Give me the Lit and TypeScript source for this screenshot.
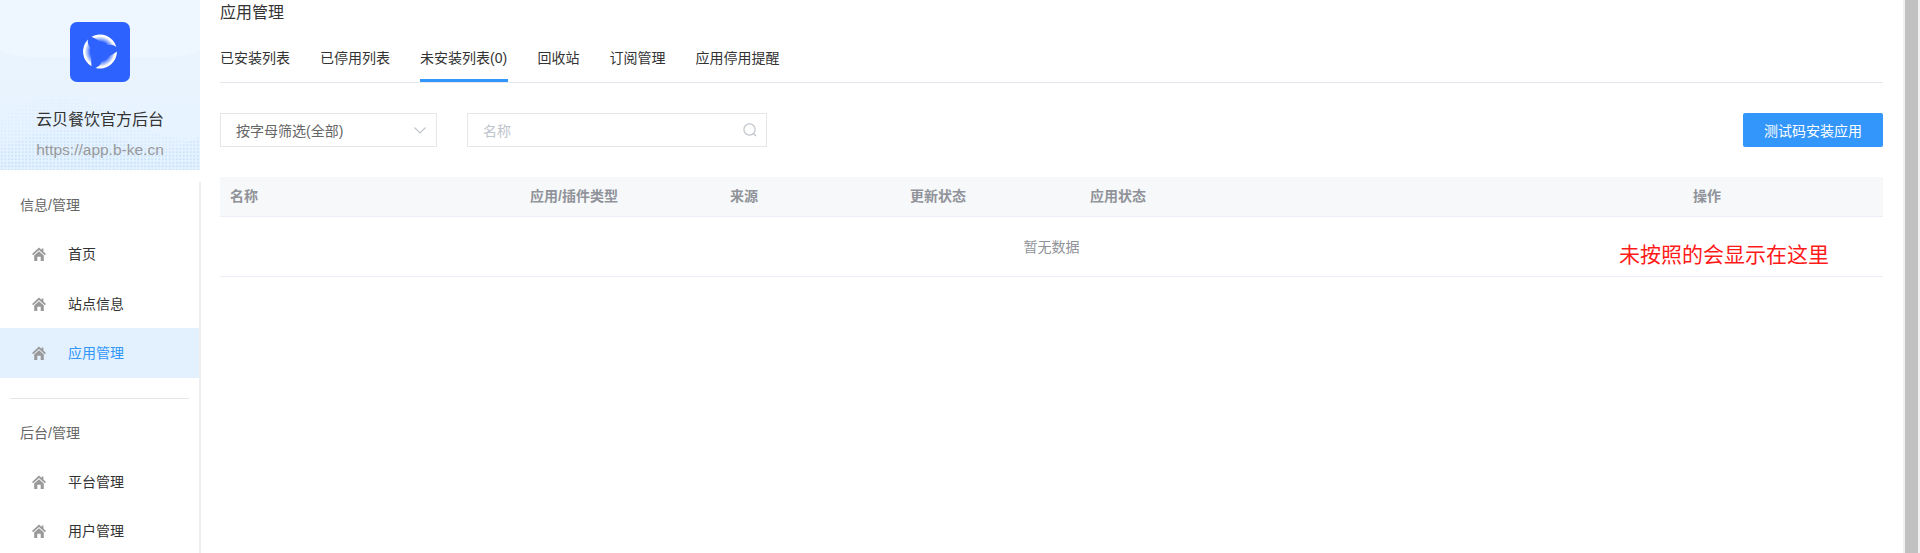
import { LitElement, html, css, svg } from "lit";
import { customElement } from "lit/decorators.js";

const homeIcon = html`<svg class="home" viewBox="0 0 14 14" width="14" height="14" aria-hidden="true">
  <path d="M7 .5 0 7l1.2 1.2L7 3l5.8 5.2L14 7l-2.6-2.4V1.6H9.6v1.3z"/>
  <path d="M2.2 8.6 7 4.2l4.8 4.4V14H8.7V9.8H5.3V14H2.2z"/>
</svg>`;

const arc = (rot: number) => svg`<path transform="rotate(${rot} 30 29.5)"
  d="M21.5 44.2A17 17 0 0 1 18 17.5Q17 22 20.6 26.1A10 10 0 0 0 21.3 34.5Q21 39 21.5 44.2Z" fill="url(#sw)"/>`;

@customElement("app-root")
export class AppRoot extends LitElement {
  static styles = css`
    :host {
      display: flex;
      height: 100vh;
      overflow: hidden;
      background: #fff;
      color: #333;
      font-family: "Liberation Sans", "Noto Sans CJK SC", sans-serif;
      font-size: 14px;
    }
    .side { width: 201px; flex: none; display: flex; flex-direction: column; }
    .brand {
      position: relative;
      width: 200px;
      height: 170px;
      flex: none;
      overflow: hidden;
      background: linear-gradient(180deg, #ecf5ff 0%, #e5f2fe 100%);
      display: flex;
      flex-direction: column;
      align-items: center;
    }
    .waves { position: absolute; inset: 0; }
    .logo {
      position: relative;
      width: 60px;
      height: 60px;
      margin-top: 22px;
      border-radius: 7px;
      background: #2d62ff;
    }
    .logo svg { display: block; }
    .brand-name {
      position: relative;
      margin-top: 26px;
      font-size: 16px;
      line-height: 24px;
      color: #333;
      white-space: nowrap;
    }
    .brand-url {
      position: relative;
      margin-top: 8px;
      font-size: 15.5px;
      line-height: 20px;
      color: #999;
      white-space: nowrap;
    }
    nav {
      margin-top: 12px;
      flex: 1;
      border-right: 2px solid #eeeeee;
    }
    .label { height: 47px; line-height: 47px; padding-left: 20px; color: #666; }
    .item {
      height: 49.5px;
      box-sizing: border-box;
      padding: 0 0 1px 32px;
      display: flex;
      align-items: center;
      gap: 22px;
      color: #333;
    }
    .item.active { background: #e3f1ff; color: #3296fa; }
    .home { fill: #999; flex: none; margin-top: 2px; }
    .sep { height: 1px; background: #e6e6e6; margin: 20px 10px 11px; }

    main { flex: 1; min-width: 0; padding: 0 20px 0 19px; }
    h1 { margin: 0; font-size: 16px; font-weight: 400; line-height: 25px; color: #333; }
    .tabs {
      margin-top: 9px;
      display: flex;
      gap: 30px;
      height: 48px;
      line-height: 48px;
      border-bottom: 1px solid #e4e7ed;
    }
    .tab { height: 48px; white-space: nowrap; color: #333; box-sizing: border-box; }
    .tab.on { border-bottom: 3px solid #3296fa; min-width: 87.5px; }
    .filters { margin-top: 30px; display: flex; gap: 30px; height: 34px; }
    .field {
      box-sizing: border-box;
      border: 1px solid #e6e6e6;
      display: flex;
      align-items: center;
      justify-content: space-between;
    }
    .select { width: 217px; padding: 0 9px 0 15px; color: #666; }
    .search { width: 300px; padding: 0 8px 0 15px; color: #c0c4cc; }
    .btn {
      margin-left: auto;
      width: 140px;
      border-radius: 2px;
      background: #3296fa;
      color: #fff;
      display: flex;
      align-items: center;
      justify-content: center;
    }
    .table { margin-top: 30px; }
    .head {
      display: grid;
      grid-template-columns: 300px 200px 180px 180px 1fr 200px;
      height: 40px;
      box-sizing: border-box;
      line-height: 39px;
      background: #f6f8fa;
      border-bottom: 1px solid #ebeef5;
      color: #909399;
      font-weight: 700;
    }
    .head span { padding-left: 10px; }
    .empty {
      position: relative;
      height: 60px;
      box-sizing: border-box;
      border-bottom: 1px solid #ebeef5;
      line-height: 60px;
      text-align: center;
      color: #909399;
    }
    .note {
      position: absolute;
      left: 1399px;
      top: 22px;
      font-size: 21px;
      line-height: 32px;
      color: #ff1a1a;
      white-space: nowrap;
    }
    .bar { width: 17px; flex: none; background: #f1f1f1; display: flex; justify-content: center; }
    .thumb { width: 13px; height: 100%; background: #c1c1c1; }
  `;

  private renderItem(text: string, active = false) {
    return html`<div class="item ${active ? "active" : ""}">${homeIcon}<span>${text}</span></div>`;
  }

  render() {
    return html`
      <aside class="side">
        <div class="brand">
          <svg class="waves" viewBox="0 0 200 170" width="200" height="170" aria-hidden="true">
            <defs>
              <pattern id="dots" width="3.5" height="3.5" patternUnits="userSpaceOnUse">
                <circle cx="1.75" cy="1.75" r=".8" fill="#a9d2fb"/>
              </pattern>
              <linearGradient id="fade" x1="0" y1="95" x2="0" y2="170" gradientUnits="userSpaceOnUse">
                <stop offset="0" stop-color="#fff" stop-opacity=".08"/>
                <stop offset="1" stop-color="#fff" stop-opacity=".45"/>
              </linearGradient>
              <mask id="m"><rect width="200" height="170" fill="url(#fade)"/></mask>
            </defs>
            <path d="M-20 -10H220V34Q200 57 170 57H30Q0 57-20 34Z" fill="#eef6ff"/>
            <path d="M0 122C30 92 70 88 110 110S170 142 200 138V170H0Z" fill="url(#dots)" mask="url(#m)"/>
            <path d="M0 150C40 125 80 125 120 140S180 150 200 135V170H0Z" fill="url(#dots)" mask="url(#m)"/>
          </svg>
          <div class="logo">
            <svg viewBox="0 0 60 60" width="60" height="60" aria-hidden="true">
              <defs>
                <radialGradient id="sw" cx="30" cy="29.5" r="17" gradientUnits="userSpaceOnUse">
                  <stop offset=".58" stop-color="#fff" stop-opacity=".08"/>
                  <stop offset=".8" stop-color="#fff" stop-opacity=".7"/>
                  <stop offset=".9" stop-color="#fff"/>
                </radialGradient>
              </defs>
              ${[0, 120, 240].map(arc)}
            </svg>
          </div>
          <div class="brand-name">云贝餐饮官方后台</div>
          <div class="brand-url">https://app.b-ke.cn</div>
        </div>
        <nav>
          <div class="label">信息/管理</div>
          ${this.renderItem("首页")}
          ${this.renderItem("站点信息")}
          ${this.renderItem("应用管理", true)}
          <div class="sep"></div>
          <div class="label">后台/管理</div>
          ${this.renderItem("平台管理")}
          ${this.renderItem("用户管理")}
        </nav>
      </aside>
      <main>
        <h1>应用管理</h1>
        <div class="tabs">
          <div class="tab">已安装列表</div>
          <div class="tab">已停用列表</div>
          <div class="tab on">未安装列表(0)</div>
          <div class="tab">回收站</div>
          <div class="tab">订阅管理</div>
          <div class="tab">应用停用提醒</div>
        </div>
        <div class="filters">
          <div class="field select">
            <span>按字母筛选(全部)</span>
            <svg viewBox="0 0 14 14" width="14" height="14" fill="none" stroke="#c0c4cc" stroke-width="1.2" aria-hidden="true"><path d="M1.5 4.5 7 10l5.5-5.5"/></svg>
          </div>
          <div class="field search">
            <span>名称</span>
            <svg viewBox="0 0 16 16" width="16" height="16" fill="none" stroke="#c0c4cc" stroke-width="1.2" aria-hidden="true"><circle cx="7.5" cy="7.5" r="5.6"/><path d="m11.5 11.5 2.5 2.5"/></svg>
          </div>
          <div class="btn">测试码安装应用</div>
        </div>
        <div class="table">
          <div class="head">
            <span>名称</span><span>应用/插件类型</span><span>来源</span><span>更新状态</span><span>应用状态</span><span>操作</span>
          </div>
          <div class="empty">暂无数据<span class="note">未按照的会显示在这里</span></div>
        </div>
      </main>
      <div class="bar"><div class="thumb"></div></div>
    `;
  }
}
